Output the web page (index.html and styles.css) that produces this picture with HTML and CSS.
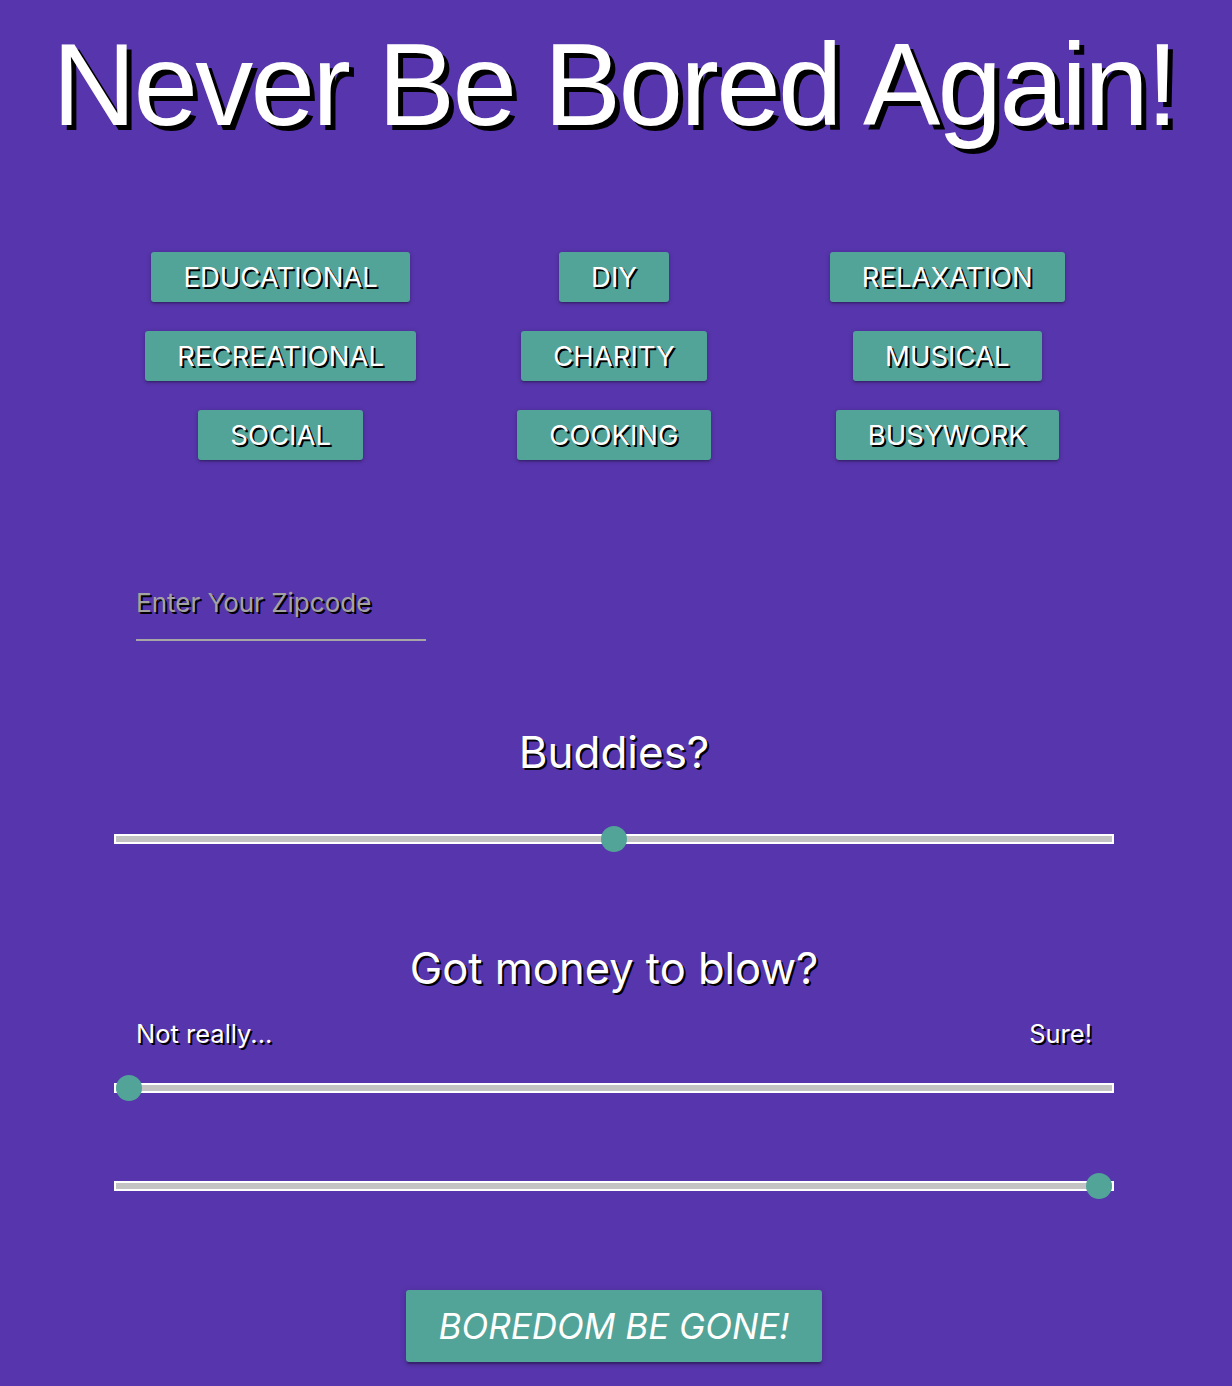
FILE: index.html
```html
<!DOCTYPE html>
<html lang="en">
<head>
<meta charset="utf-8">
<title>Never Be Bored Again!</title>
<link rel="stylesheet" href="styles.css">
</head>
<body>
<main class="page">
  <h1 class="title">Never Be Bored Again!</h1>

  <div class="categories">
    <div class="cat-cell"><button class="btn">Educational</button></div>
    <div class="cat-cell"><button class="btn">DIY</button></div>
    <div class="cat-cell"><button class="btn">Relaxation</button></div>
    <div class="cat-cell"><button class="btn">Recreational</button></div>
    <div class="cat-cell"><button class="btn">Charity</button></div>
    <div class="cat-cell"><button class="btn">Musical</button></div>
    <div class="cat-cell"><button class="btn">Social</button></div>
    <div class="cat-cell"><button class="btn">Cooking</button></div>
    <div class="cat-cell"><button class="btn">Busywork</button></div>
  </div>

  <div class="zip-row">
    <input class="zip" type="text" placeholder="Enter Your Zipcode">
  </div>

  <h2 class="question q-buddies">Buddies?</h2>
  <input class="range r-buddies" type="range" min="0" max="100" value="50">

  <h2 class="question q-money">Got money to blow?</h2>
  <div class="range-labels">
    <span class="label">Not really...</span>
    <span class="label">Sure!</span>
  </div>
  <input class="range r-min" type="range" min="0" max="100" value="0">
  <input class="range r-max" type="range" min="0" max="100" value="100">

  <div class="go-row">
    <button class="btn btn-go">Boredom Be Gone!</button>
  </div>
</main>
</body>
</html>
```

FILE: styles.css
```css
html, body {
  margin: 0;
  padding: 0;
}
body {
  background: #5735ac;
  color: #fff;
  font-family: Inter, "Noto Sans", sans-serif;
  min-height: 1386px;
}
.page {
  width: 1000px;
  margin: 0 0 0 114px;
  display: flex;
  flex-direction: column;
}
.title {
  margin: 25px -110px 0;
  font-family: "Liberation Sans", Arial, sans-serif;
  font-weight: 400;
  font-size: 116px;
  line-height: 120px;
  text-align: center;
  letter-spacing: -2.7px;
  text-shadow: 5px 5px 0 #000;
}
.categories {
  margin-top: 107px;
  display: grid;
  grid-template-columns: repeat(3, 1fr);
  row-gap: 29px;
}
.cat-cell {
  display: flex;
  justify-content: center;
}
.btn {
  border: none;
  border-radius: 3px;
  background: #52a398;
  color: #fff;
  font-family: Inter, "Noto Sans", sans-serif;
  font-size: 27.5px;
  text-transform: uppercase;
  height: 50px;
  padding: 0 32px;
  text-shadow: 2px 2px 0 #000;
  box-shadow: 0 2px 2px 0 rgba(0,0,0,.14), 0 3px 1px -2px rgba(0,0,0,.12), 0 1px 5px 0 rgba(0,0,0,.2);
  cursor: pointer;
}
.zip-row {
  margin-top: 121px;
  padding-left: 22px;
}
.zip {
  width: 290px;
  height: 60px;
  box-sizing: border-box;
  background: transparent;
  border: none;
  border-bottom: 2px solid #a6a6a6;
  padding: 0 0 16px;
  font-family: Inter, "Noto Sans", sans-serif;
  font-size: 26px;
  color: #fff;
  outline: none;
  display: block;
}
.zip::placeholder {
  color: #a3a3a3;
  text-shadow: 2px 2px 0 #000;
}
.question {
  margin: 0;
  font-weight: 400;
  text-align: center;
  font-size: 44px;
  line-height: 50px;
  text-shadow: 2px 2px 0 #000;
}
.q-buddies {
  margin-top: 86px;
}
.q-money {
  margin-top: 89px;
  font-size: 43.5px;
}
.range {
  -webkit-appearance: none;
  appearance: none;
  display: block;
  width: 1000px;
  margin: 0;
  height: 30px;
  background: transparent;
}
.range::-webkit-slider-runnable-track {
  height: 10px;
  box-sizing: border-box;
  background: #c3c3c3;
  border: 2px solid #fff;
}
.range::-webkit-slider-thumb {
  -webkit-appearance: none;
  width: 26px;
  height: 26px;
  border-radius: 50%;
  background: #52a398;
  border: none;
  margin-top: -10px;
}
.r-buddies {
  margin-top: 47px;
}
.range-labels {
  margin-top: 24px;
  display: flex;
  justify-content: space-between;
  padding: 0 22px;
}
.label {
  font-size: 25.5px;
  line-height: 34px;
  text-shadow: 2px 2px 0 #000;
}
.r-min {
  margin-top: 22px;
}
.r-max {
  margin-top: 68px;
}
.go-row {
  margin-top: 89px;
  display: flex;
  justify-content: center;
}
.btn-go {
  height: 72px;
  width: 416px;
  padding: 0;
  font-size: 35px;
  font-style: italic;
  text-shadow: none;
  box-shadow: 0 3px 3px 0 rgba(0,0,0,.14), 0 1px 7px 0 rgba(0,0,0,.12), 0 3px 1px -1px rgba(0,0,0,.2);
}
```
